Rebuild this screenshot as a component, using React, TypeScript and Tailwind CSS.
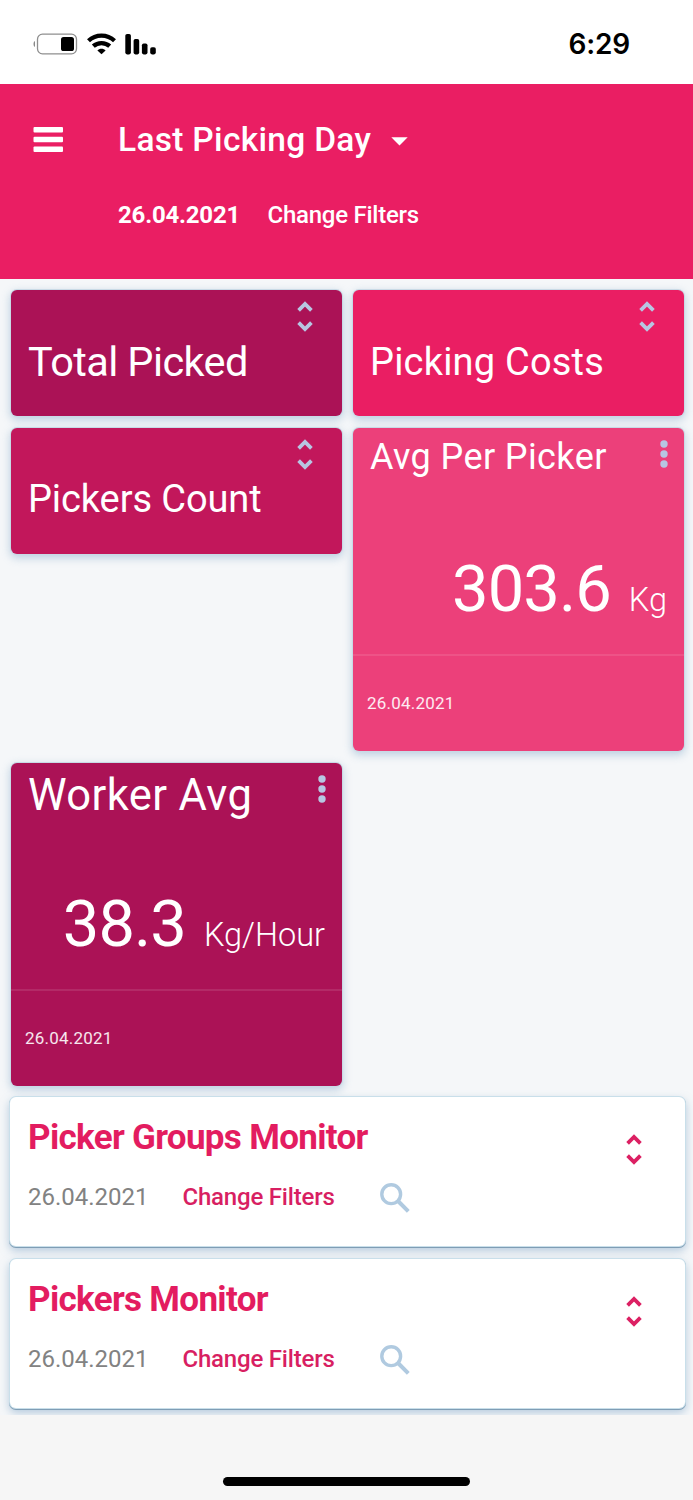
import clsx from "clsx";

const DATE = "26.04.2021";

function StatusBar() {
  return (
    <div className="flex h-[84px] items-center justify-between bg-white pt-1 pr-[63px] pl-8">
      <div className="flex items-center gap-[9px]">
        <svg className="h-[22px] w-[46px]" viewBox="0 0 46 22" fill="none">
          <path d="M3 8C1 8.6 1 13.4 3 14Z" fill="#8a8a8a" />
          <rect x="5.5" y="1.2" width="39" height="19.6" rx="5" stroke="#8f8f8f" strokeWidth="1.3" />
          <rect x="29" y="4" width="13" height="14" rx="2.6" fill="#000" />
        </svg>
        <svg className="h-[22px] w-[29px]" viewBox="0 0 29 22" fill="none" stroke="#000" strokeWidth="4.3">
          <path d="M1.5 7.8C8.8 1 20.2 1 27.5 7.8" />
          <path d="M6.3 13.2C10.9 9 18.1 9 22.7 13.2" />
          <path d="M14.5 21.3L10.4 17.4C12.5 15.2 16.5 15.2 18.6 17.4Z" fill="#000" stroke="none" />
        </svg>
        <svg className="h-[22px] w-[31px]" viewBox="0 0 31 22">
          <rect x="0.3" y="1" width="5.6" height="20.4" rx="1.8" />
          <rect x="8.6" y="6" width="5.6" height="15.4" rx="1.8" />
          <rect x="16.9" y="10.4" width="5.6" height="11" rx="1.8" />
          <rect x="25.2" y="14.2" width="5.6" height="7.2" rx="1.8" />
        </svg>
      </div>
      <span className="font-['Inter',sans-serif] text-[28px] leading-none font-semibold tracking-[-0.2px] text-black">
        6:29
      </span>
    </div>
  );
}

function Header() {
  return (
    <header className="flex h-[195px] bg-[#ea1e63] pl-[33px] text-white">
      <button className="mt-[43px] h-[26px] w-[30px]" aria-label="Menu">
        <svg className="h-[26px] w-[30px]" viewBox="0 0 30 26" fill="currentColor">
          <rect x="0.5" y="0" width="29.5" height="5.4" rx="1" />
          <rect x="0.5" y="9.8" width="29.5" height="5.4" rx="1" />
          <rect x="0.5" y="19.6" width="29.5" height="5.4" rx="1" />
        </svg>
      </button>
      <div className="ml-[55px] pt-[36px]">
        <div className="flex items-center">
          <h1 className="w-[273px] text-[33.5px] leading-10 font-medium tracking-[0.3px] whitespace-nowrap">
            Last Picking Day
          </h1>
          <svg className="mt-[3px] h-[9px] w-[17px]" viewBox="0 0 17 9" fill="currentColor">
            <path d="M0.3 0.3H16.7L8.5 8.6Z" />
          </svg>
        </div>
        <div className="mt-10 flex text-[24px] leading-[30px] whitespace-nowrap">
          <span className="w-[149.5px] font-bold tracking-[-0.2px]">{DATE}</span>
          <button className="font-medium tracking-[-0.25px]">Change Filters</button>
        </div>
      </div>
    </header>
  );
}

function ExpandIcon({ className }: { className?: string }) {
  return (
    <svg
      className={clsx("h-[32px] w-[16px] shrink-0", className)}
      viewBox="0 0 16 32"
      fill="none"
      stroke="currentColor"
      strokeWidth="3.8"
    >
      <path d="M1.6 10.4L8 4L14.4 10.4" />
      <path d="M1.6 22.6L8 29L14.4 22.6" />
    </svg>
  );
}

function MoreIcon() {
  return (
    <svg className="mt-3 h-[28px] w-2 shrink-0 text-[#b7c6e2]" viewBox="0 0 8 28" fill="currentColor">
      <circle cx="4" cy="4" r="3.7" />
      <circle cx="4" cy="14" r="3.7" />
      <circle cx="4" cy="24" r="3.7" />
    </svg>
  );
}

const tile =
  "rounded-md text-white shadow-[0_0_0_1px_#c9dae6,0_3px_8px_1px_rgba(120,160,195,0.45)]";

function CollapsedTile({ title, color, titleClass }: { title: string; color: string; titleClass: string }) {
  return (
    <div className={clsx(tile, color, "flex h-[126px] items-start justify-between pr-[29px] pl-[17px]")}>
      <h2 className={clsx("leading-[50px] whitespace-nowrap", titleClass)}>{title}</h2>
      <ExpandIcon className="mt-[10px] text-[#b7c6e2]" />
    </div>
  );
}

interface ValueTileProps {
  title: string;
  value: string;
  unit: string;
  color: string;
  titleClass: string;
}

function ValueTile({ title, value, unit, color, titleClass }: ValueTileProps) {
  return (
    <div className={clsx(tile, color, "flex h-[323px] flex-col")}>
      <div className="flex h-[60px] items-start justify-between pr-4 pl-[17px]">
        <h2 className={clsx("leading-[50px] whitespace-nowrap", titleClass)}>{title}</h2>
        <MoreIcon />
      </div>
      <div className="flex h-[166px] items-baseline justify-end gap-[18px] pt-[60.5px] pr-[17px] whitespace-nowrap">
        <span className="text-[65px] leading-[80px] tracking-[-0.9px]">{value}</span>
        <span className="text-[32.5px] font-light">{unit}</span>
      </div>
      <div className="flex flex-1 items-center border-t-2 border-white/10 pl-[14px]">
        <span className="text-[17px] tracking-[0.2px] text-white/90">{DATE}</span>
      </div>
    </div>
  );
}

function MonitorPanel({ title }: { title: string }) {
  return (
    <section className="flex h-[149px] justify-between rounded-md bg-white pr-[43px] pl-[18px] shadow-[0_0_0_1px_#c9dfea,0_1px_0_1px_#7f9db5,0_4px_8px_1px_rgba(120,160,195,0.5)]">
      <div>
        <h2 className="pt-[18px] text-[35px] leading-[46px] font-bold tracking-[-0.68px] whitespace-nowrap text-[#e31c60]">
          {title}
        </h2>
        <div className="mt-[19px] flex items-center text-[24px] leading-[30px] whitespace-nowrap">
          <span className="w-[154.5px] text-[#828282]">{DATE}</span>
          <button className="w-[197.5px] text-left font-medium tracking-[-0.2px] text-[#d81f62]">
            Change Filters
          </button>
          <svg className="mt-[3px] h-[30px] w-[30px] text-[#b0cae0]" viewBox="0 0 30 30" fill="none" stroke="currentColor">
            <circle cx="11.2" cy="11.2" r="9.4" strokeWidth="3.4" />
            <path d="M18 18L28.3 28.3" strokeWidth="4" />
          </svg>
        </div>
      </div>
      <ExpandIcon className="mt-[36px] text-[#dc2063]" />
    </section>
  );
}

export default function App() {
  return (
    <div className="flex h-[1500px] w-[693px] flex-col overflow-hidden bg-[#f6f6f6] font-['Roboto',sans-serif]">
      <StatusBar />
      <Header />
      <main className="h-[1136px] overflow-hidden bg-[#f5f7f9] pt-[11px]">
        <div className="grid grid-cols-[331px_331px] grid-rows-[126px_323px_323px] items-start gap-x-[11px] gap-y-3 pl-[11px]">
          <CollapsedTile title="Total Picked" color="bg-[#ab1256]" titleClass="pt-[47px] text-[41.5px] tracking-[-0.6px]" />
          <CollapsedTile title="Picking Costs" color="bg-[#ea1e63]" titleClass="pt-[47px] text-[38px] tracking-[0.2px]" />
          <CollapsedTile title="Pickers Count" color="bg-[#c2175b]" titleClass="pt-[46px] text-[38px] tracking-[-0.1px]" />
          <ValueTile
            title="Avg Per Picker"
            value="303.6"
            unit="Kg"
            color="bg-[#ec407a]"
            titleClass="pt-1 text-[36px] tracking-[0.4px]"
          />
          <ValueTile
            title="Worker Avg"
            value="38.3"
            unit="Kg/Hour"
            color="bg-[#ab1256]"
            titleClass="pt-2 text-[43.5px] tracking-[0.4px]"
          />
        </div>
        <div className="mt-[11px] flex flex-col gap-[13px] pr-2 pl-2.5">
          <MonitorPanel title="Picker Groups Monitor" />
          <MonitorPanel title="Pickers Monitor" />
        </div>
      </main>
      {/* Home indicator */}
      <div className="mx-auto mt-[62px] h-[9px] w-[247px] rounded-full bg-black" />
    </div>
  );
}
